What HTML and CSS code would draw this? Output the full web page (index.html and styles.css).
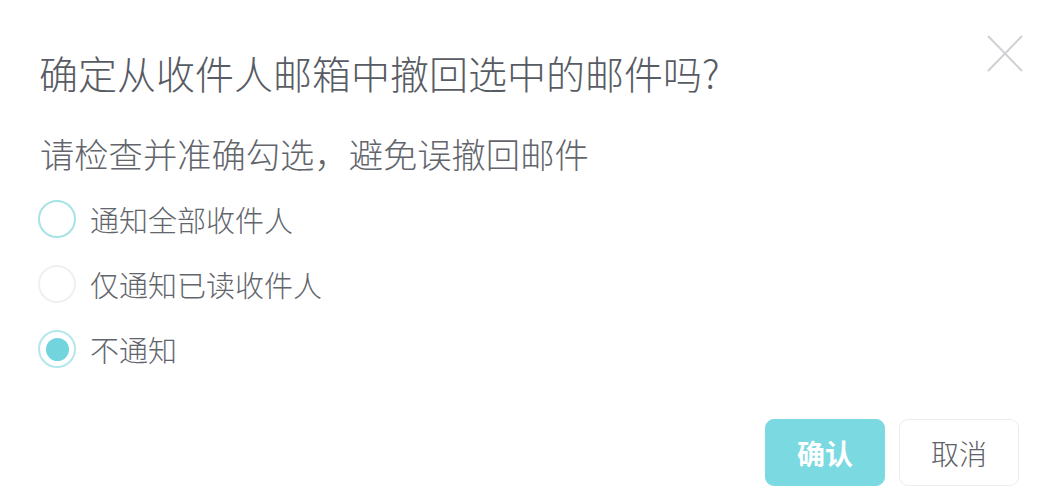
FILE: index.html
```html
<!DOCTYPE html>
<html lang="zh-CN">
<head>
<meta charset="utf-8">
<title>撤回邮件</title>
<link rel="stylesheet" href="styles.css">
</head>
<body>
<div class="dialog">
  <div class="header">
    <h1 class="title">确定从收件人邮箱中撤回选中的邮件吗?</h1>
    <button class="close" aria-label="关闭">
      <svg width="36" height="37" viewBox="0 0 36 37"><path d="M1 1 L35 36 M35 1 L1 36" stroke="#cfd0d3" stroke-width="2" fill="none"/></svg>
    </button>
  </div>
  <p class="subtitle">请检查并准确勾选，避免误撤回邮件</p>
  <div class="options">
    <label class="option"><span class="radio radio-focus"></span><span class="label">通知全部收件人</span></label>
    <label class="option"><span class="radio radio-faint"></span><span class="label">仅通知已读收件人</span></label>
    <label class="option"><span class="radio radio-checked"><span class="dot"></span></span><span class="label">不通知</span></label>
  </div>
  <div class="footer">
    <button class="btn btn-primary">确认</button>
    <button class="btn btn-default">取消</button>
  </div>
</div>
</body>
</html>
```
FILE: styles.css
```css
html, body {
  margin: 0;
  padding: 0;
  background: #ffffff;
}
body {
  font-family: "Noto Sans CJK SC", "Noto Sans", sans-serif;
  color: #66696f;
}
.dialog {
  width: 1054px;
  height: 500px;
  box-sizing: border-box;
  padding: 35px 31px 0 38px;
  display: flex;
  flex-direction: column;
}
.header {
  display: flex;
  justify-content: space-between;
  align-items: flex-start;
}
.title {
  margin: 12px 0 0 1px;
  font-size: 39px;
  line-height: 50px;
  font-weight: 300;
  color: #575b63;
}
.close {
  border: 0;
  background: none;
  padding: 0;
  width: 36px;
  height: 37px;
  cursor: pointer;
}
.close svg { display: block; }
.subtitle {
  margin: 34px 0 0 2px;
  font-size: 34.3px;
  line-height: 44px;
  font-weight: 300;
  color: #62656c;
}
.options {
  margin-top: 24px;
  display: flex;
  flex-direction: column;
  gap: 25px;
}
.option {
  display: flex;
  align-items: center;
  gap: 14px;
  height: 40px;
}
.radio {
  width: 38px;
  height: 38px;
  box-sizing: border-box;
  border-radius: 50%;
  border: 2px solid #e9eaec;
  display: flex;
  align-items: center;
  justify-content: center;
}
.radio-focus {
  border-color: #a6e3e7;
}
.radio-faint {
  border-color: #f0f0f1;
}
.radio-checked {
  border-color: #b3e7ea;
}
.dot {
  width: 23px;
  height: 23px;
  border-radius: 50%;
  background: #72d5de;
}
.label {
  font-size: 29px;
  line-height: 40px;
  font-weight: 300;
  color: #62656c;
}
.footer {
  margin-top: 50px;
  display: flex;
  justify-content: flex-end;
  gap: 14px;
  padding-right: 4px;
}
.btn {
  width: 120px;
  height: 67px;
  box-sizing: border-box;
  font-family: "Noto Sans CJK SC", "Noto Sans", sans-serif;
  font-size: 28px;
  border-radius: 9px;
  cursor: pointer;
}
.btn-primary {
  background: #7bd9e2;
  border: 1px solid #7bd9e2;
  color: #ffffff;
  font-weight: 700;
}
.btn-default {
  background: #ffffff;
  border: 1px solid #ececee;
  color: #5d6168;
  font-weight: 300;
}
```
